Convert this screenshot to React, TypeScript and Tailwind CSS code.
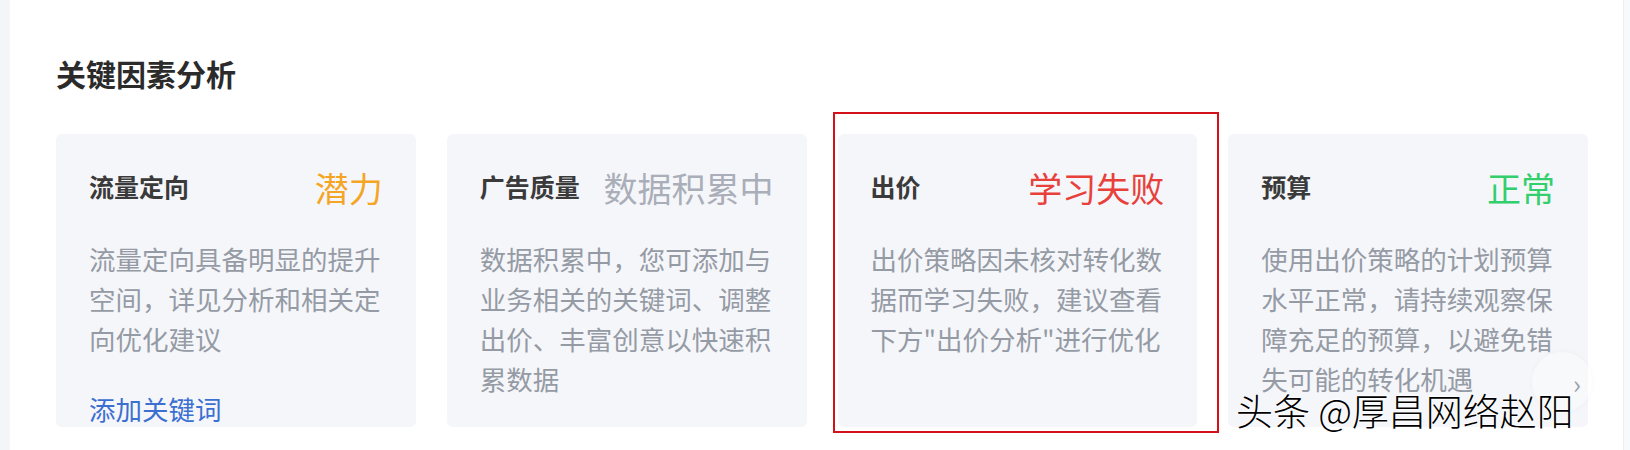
import React from "react";

const font = { fontFamily: '"Noto Sans CJK SC", "Noto Sans", sans-serif' };

type Factor = {
  title: string;
  status: string;
  statusClass: string;
  lines: string[];
  link?: string;
  marked?: boolean;
};

const factors: Factor[] = [
  {
    title: "流量定向",
    status: "潜力",
    statusClass: "text-[#f5a524]",
    lines: ["流量定向具备明显的提升", "空间，详见分析和相关定", "向优化建议"],
    link: "添加关键词",
  },
  {
    title: "广告质量",
    status: "数据积累中",
    statusClass: "text-[#a9aeb8]",
    lines: ["数据积累中，您可添加与", "业务相关的关键词、调整", "出价、丰富创意以快速积", "累数据"],
  },
  {
    title: "出价",
    status: "学习失败",
    statusClass: "text-[#e8403a]",
    lines: ["出价策略因未核对转化数", "据而学习失败，建议查看", "下方\"出价分析\"进行优化"],
    marked: true,
  },
  {
    title: "预算",
    status: "正常",
    statusClass: "text-[#33cf6c]",
    lines: ["使用出价策略的计划预算", "水平正常，请持续观察保", "障充足的预算，以避免错", "失可能的转化机遇"],
  },
];

function FactorCard({ f }: { f: Factor }) {
  return (
    <div className="relative h-[293px] rounded-md bg-[#f5f6fa] px-[33px] pt-[33px]">
      {f.marked && (
        <div className="pointer-events-none absolute -left-[5px] -right-[22px] -top-[22px] -bottom-[6px] border-2 border-[#d4111b]" />
      )}
      <div className="flex h-[40px] items-center justify-between whitespace-nowrap">
        <span className="text-[25px] font-semibold text-[#3a3a3a]">{f.title}</span>
        <span className={`text-[34px] ${f.statusClass}`}>{f.status}</span>
      </div>
      <div className="mt-[32px] text-[26.5px] leading-[40px] text-[#959ba5] whitespace-nowrap">
        {f.lines.map((l, i) => (
          <div key={i}>{l}</div>
        ))}
      </div>
      {f.link && (
        <div className="mt-[30px] text-[26.5px] leading-[40px] text-[#3b6fd1]">{f.link}</div>
      )}
    </div>
  );
}

export default function App() {
  return (
    <div className="relative flex h-[450px] w-[1630px] overflow-hidden bg-white" style={font}>
      <div className="w-[10px] shrink-0 bg-[#f4f5f8]" />
      <div className="flex-1 pl-[46px] pt-[56px]">
        <div className="text-[30px] font-bold leading-[34px] text-[#2b2b2b]">关键因素分析</div>
        <div className="mt-[44px] grid w-[1532px] grid-cols-4 gap-[31px]">
          {factors.map((f) => (
            <FactorCard key={f.title} f={f} />
          ))}
        </div>
      </div>
      <div className="w-[7px] shrink-0 border-l border-[#eceef2] bg-[#f8f9fb]" />

      {/* faint carousel button */}
      <div className="absolute left-[1532px] top-[352px] flex h-[60px] w-[60px] items-center justify-center rounded-full bg-white/30 shadow-[0_0_6px_rgba(0,0,0,0.03)]">
        <span className="ml-[30px] text-[26px] text-[#9aa0aa]">›</span>
      </div>

      {/* watermark */}
      <div
        className="absolute left-[1236px] top-[395px] whitespace-nowrap text-[37px] font-light leading-[31px] text-black"
        style={{ textShadow: "0 0 2px #fff, 0 0 2px #fff, 0 0 3px #fff" }}
      >
        头条 @厚昌网络赵阳
      </div>
    </div>
  );
}
